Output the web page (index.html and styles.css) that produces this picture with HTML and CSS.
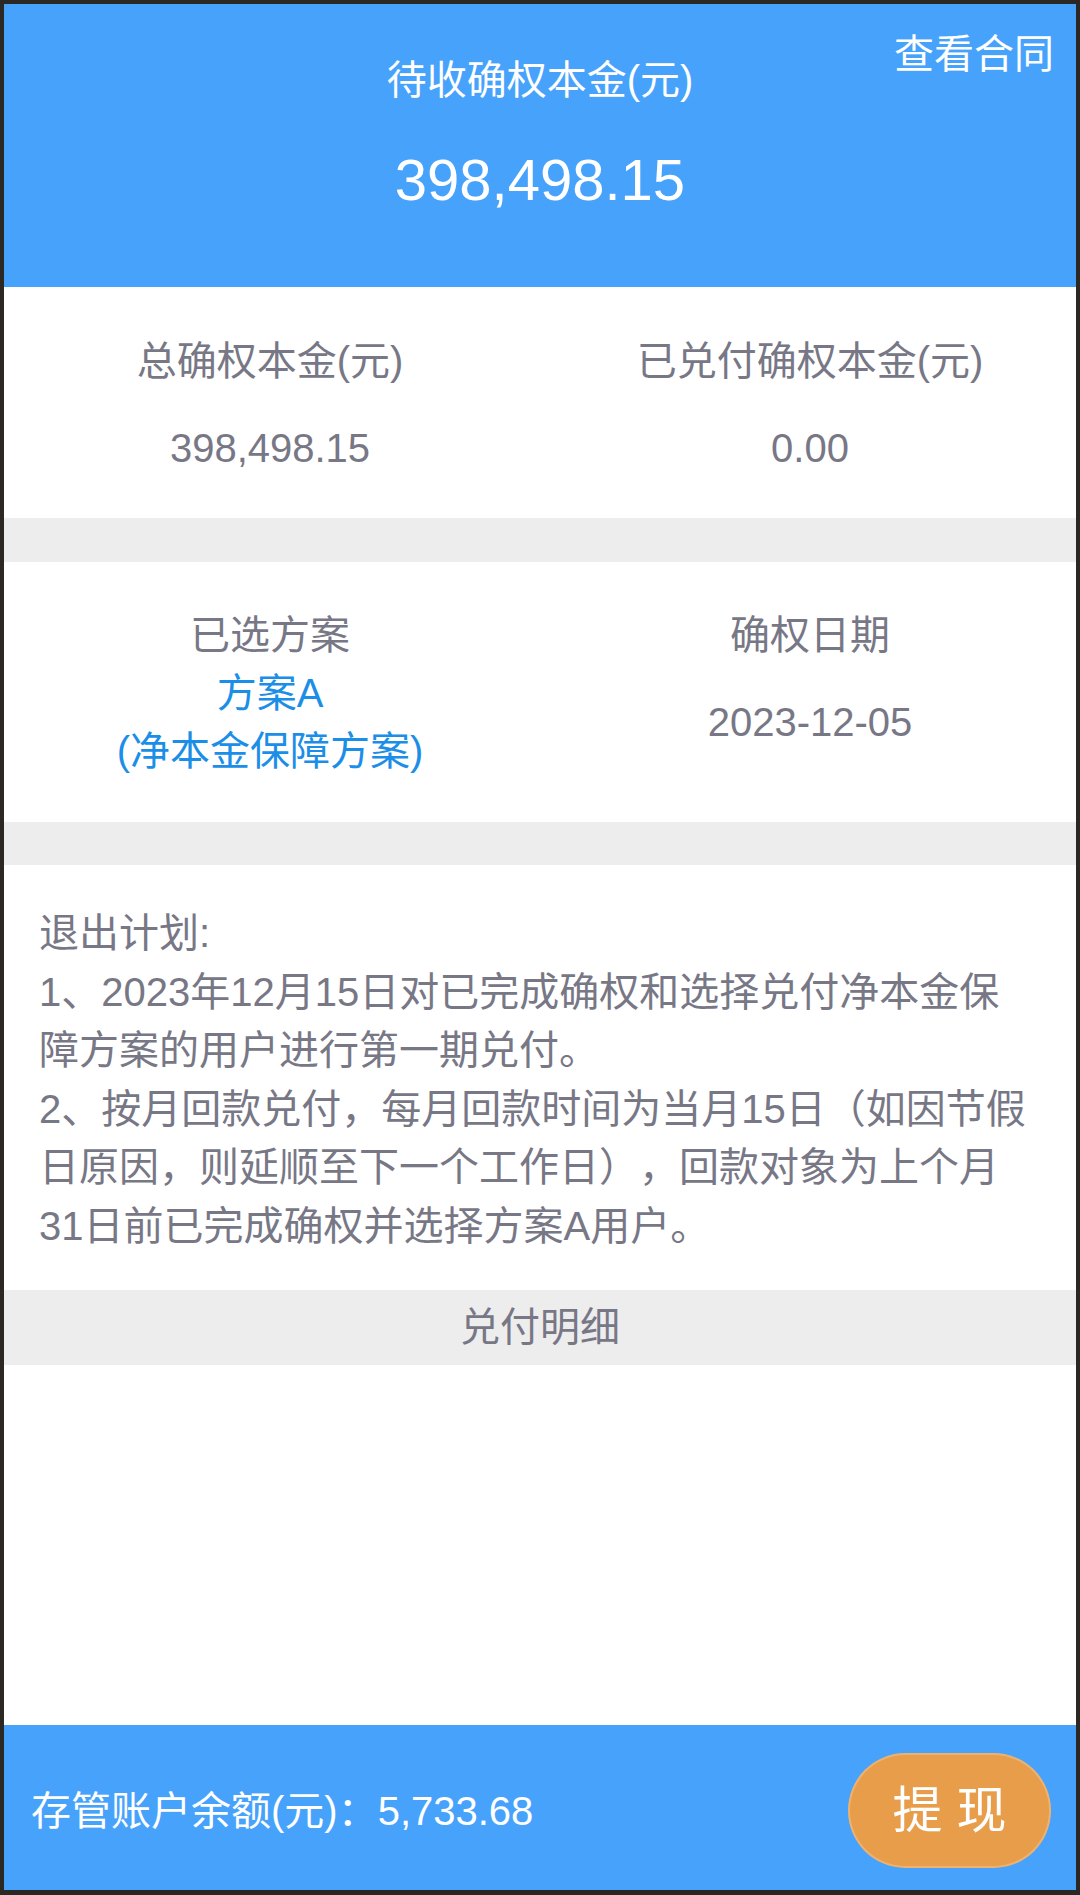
FILE: index.html
```html
<!DOCTYPE html>
<html lang="zh-CN">
<head>
<meta charset="utf-8">
<title>确权详情</title>
<link rel="stylesheet" href="styles.css">
</head>
<body>
<div class="page">
  <header class="hero">
    <a class="contract-link">查看合同</a>
    <div class="hero-title">待收确权本金(元)</div>
    <div class="hero-amount">398,498.15</div>
  </header>

  <section class="panel stats">
    <div class="cell">
      <div class="label">总确权本金(元)</div>
      <div class="value">398,498.15</div>
    </div>
    <div class="cell">
      <div class="label">已兑付确权本金(元)</div>
      <div class="value">0.00</div>
    </div>
  </section>

  <div class="divider"></div>

  <section class="panel plan">
    <div class="cell">
      <div class="label">已选方案</div>
      <div class="plan-name">方案A<br>(净本金保障方案)</div>
    </div>
    <div class="cell">
      <div class="label">确权日期</div>
      <div class="value">2023-12-05</div>
    </div>
  </section>

  <div class="divider"></div>

  <section class="notes">
    <p>退出计划:</p>
    <p>1、2023年12月15日对已完成确权和选择兑付净本金保障方案的用户进行第一期兑付。</p>
    <p>2、按月回款兑付，每月回款时间为当月15日（如因节假日原因，则延顺至下一个工作日），回款对象为上个月31日前已完成确权并选择方案A用户。</p>
  </section>

  <div class="detail-head">兑付明细</div>
  <div class="detail-body"></div>

  <footer class="bottom-bar">
    <div class="balance">存管账户余额(元)：5,733.68</div>
    <button class="withdraw">提 现</button>
  </footer>
</div>
<div class="frame"></div>
</body>
</html>
```

FILE: styles.css
```css
* {
  box-sizing: border-box;
}

html, body {
  margin: 0;
  padding: 0;
}

body {
  width: 1080px;
  height: 1895px;
  background: #ffffff;
  font-family: "Liberation Sans", "Noto Sans CJK SC", sans-serif;
  font-size: 40px;
  color: #777786;
  overflow: hidden;
  text-spacing-trim: space-all;
}

.page {
  height: 1895px;
  display: flex;
  flex-direction: column;
}

/* Header */
.hero {
  position: relative;
  height: 287px;
  flex: none;
  background: #47a2fc;
  color: #ffffff;
  text-align: center;
  padding-top: 51px;
}

.contract-link {
  position: absolute;
  top: 25px;
  right: 26px;
  line-height: 58px;
  color: #ffffff;
  text-decoration: none;
}

.hero-title {
  line-height: 58px;
}

.hero-amount {
  margin-top: 36px;
  font-size: 58px;
  line-height: 70px;
}

/* Two column panels */
.panel {
  flex: none;
  display: grid;
  grid-template-columns: 1fr 1fr;
  text-align: center;
  background: #ffffff;
}

.stats {
  padding: 45px 0 41px;
}

.plan {
  padding: 44px 0 42px;
}

.label {
  line-height: 58px;
}

.value {
  margin-top: 29px;
  line-height: 58px;
}

.plan-name {
  line-height: 58px;
  color: #1b8ee8;
}

.divider {
  flex: none;
  height: 44px;
  background: #ededed;
}

.plan + .divider {
  height: 43px;
}

/* Notes */
.notes {
  flex: none;
  height: 425px;
  padding: 39px 48px 0 39px;
  line-height: 58.5px;
  text-spacing-trim: space-all;
}

.notes p {
  margin: 0;
}

/* Detail */
.detail-head {
  flex: none;
  height: 75px;
  line-height: 75px;
  background: #ededed;
  text-align: center;
}

.detail-body {
  flex: 1;
  background: #ffffff;
}

/* Bottom bar */
.bottom-bar {
  flex: none;
  height: 170px;
  background: #47a2fc;
  display: flex;
  align-items: center;
  justify-content: space-between;
  padding: 0 29px 0 31px;
  color: #ffffff;
}

.balance {
  line-height: 58px;
  padding-top: 2px;
}

.withdraw {
  width: 203px;
  height: 115px;
  border: none;
  border-radius: 58px;
  background: #e89d4b;
  box-shadow: inset 0 0 0 2px rgba(255, 255, 255, 0.22);
  color: #ffffff;
  font-family: "Liberation Sans", "Noto Sans CJK SC", sans-serif;
  font-size: 50px;
  line-height: 60px;
  padding: 0;
  margin-top: 1px;
}

/* Device frame overlay */
.frame {
  position: fixed;
  top: 0;
  left: 0;
  width: 1080px;
  height: 1895px;
  border: 4px solid #2b2824;
  border-bottom-width: 5px;
  pointer-events: none;
}
```
